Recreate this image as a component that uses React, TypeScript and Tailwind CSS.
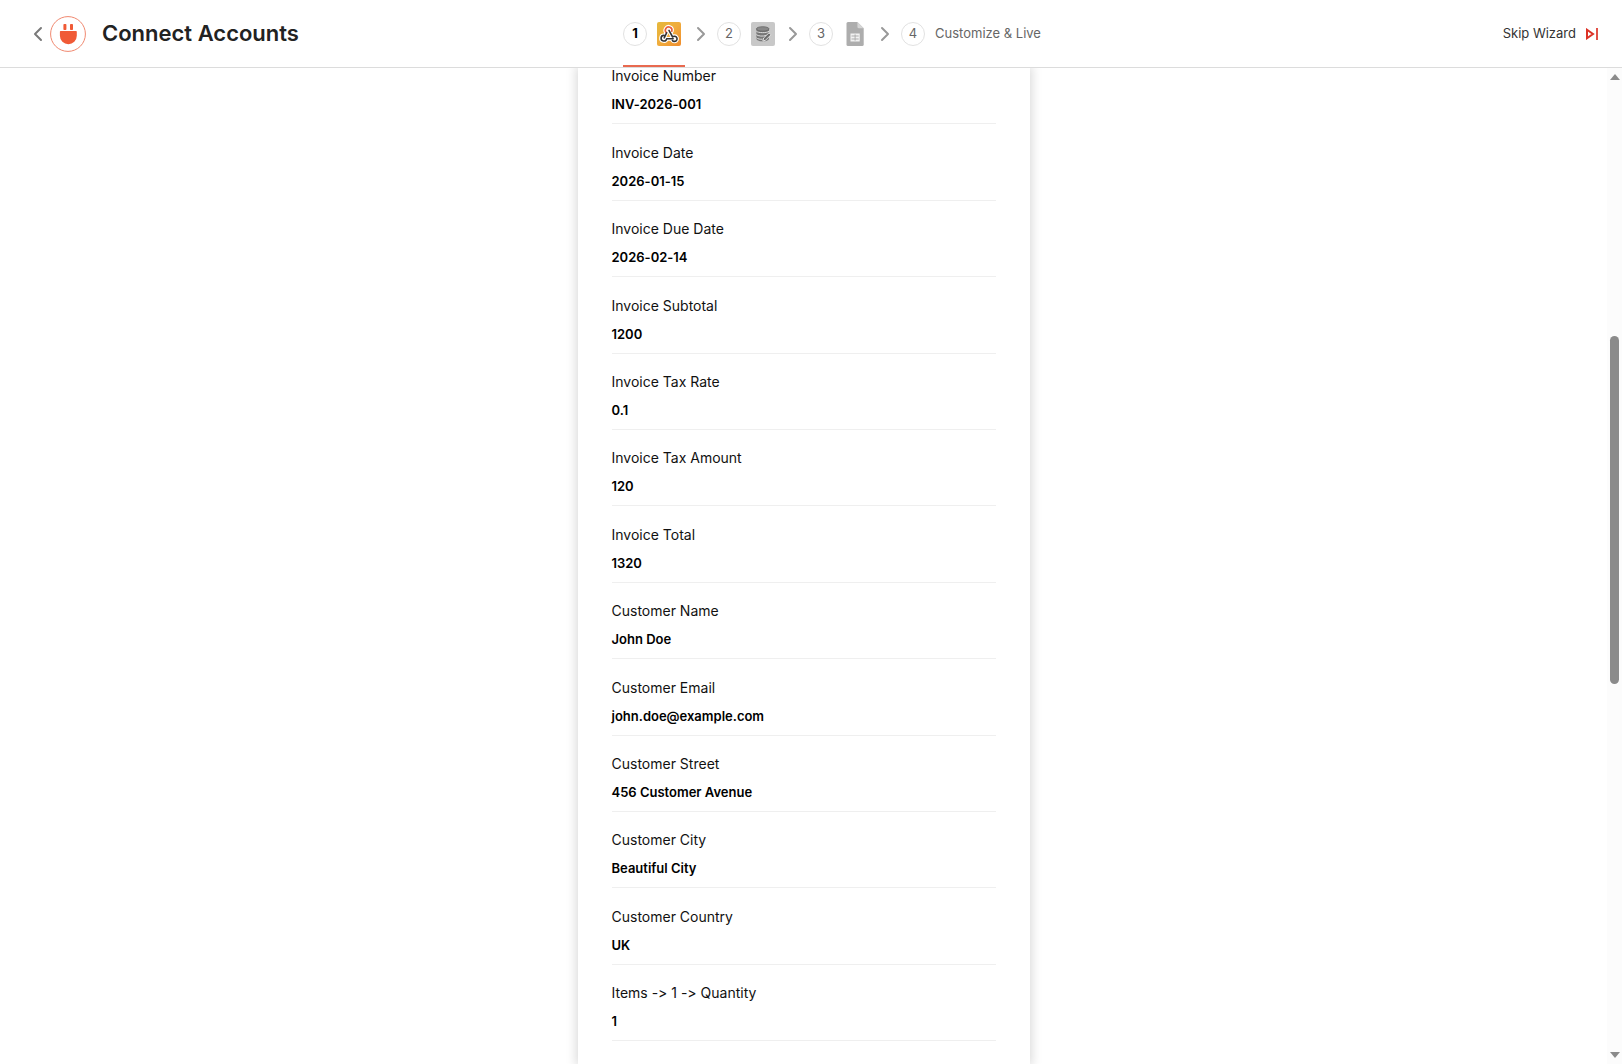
import React from 'react';
import { ChevronLeft, ChevronRight } from 'lucide-react';

const fields = [
  { label: 'Invoice Number', value: 'INV-2026-001' },
  { label: 'Invoice Date', value: '2026-01-15' },
  { label: 'Invoice Due Date', value: '2026-02-14' },
  { label: 'Invoice Subtotal', value: '1200' },
  { label: 'Invoice Tax Rate', value: '0.1' },
  { label: 'Invoice Tax Amount', value: '120' },
  { label: 'Invoice Total', value: '1320' },
  { label: 'Customer Name', value: 'John Doe' },
  { label: 'Customer Email', value: 'john.doe@example.com' },
  { label: 'Customer Street', value: '456 Customer Avenue' },
  { label: 'Customer City', value: 'Beautiful City' },
  { label: 'Customer Country', value: 'UK' },
  { label: 'Items -> 1 -> Quantity', value: '1' },
];

const PlugLogo: React.FC = () => (
  <svg viewBox="0 0 36 36" className="h-9 w-9 shrink-0">
    <circle cx="18" cy="18" r="17.4" fill="#fff" stroke="#f0886f" strokeWidth="1" />
    <rect x="13.4" y="8" width="3" height="6" rx="0.8" fill="#f05a36" />
    <rect x="20" y="8" width="3" height="6" rx="0.8" fill="#f05a36" />
    <path d="M10.6 15h15.500a.7.7 0 0 1 .7.700V19.800a8.450 8.450 0 0 1-16.900 0v-4.100a.7.7 0 0 1 .7-.700z" fill="#f05a36" />
  </svg>
);

const WebhookIcon: React.FC = () => (
  <svg viewBox="0 0 24 24" className="h-6 w-6">
    <defs>
      <linearGradient id="hook-bg" x1="0" y1="0" x2="1" y2="1">
        <stop offset="0" stopColor="#e5b83c" />
        <stop offset="0.5" stopColor="#f0ac3c" />
        <stop offset="1" stopColor="#f08c2c" />
      </linearGradient>
    </defs>
    <rect width="24" height="24" rx="2" fill="url(#hook-bg)" />
    <g fill="none" strokeLinecap="round" strokeLinejoin="round">
      <g stroke="#fff" strokeWidth="3.8">
        <path d="M9.6 10.8a3.3 3.3 0 1 1 5.2-1.6" />
        <path d="M12 8.4l3.6 6.6a2.600 2.600 0 1 1-.2 3.400" />
        <path d="M9.6 10.8l-2.4 5M7 13.400a2.800 2.800 0 1 0 2.600 3.400h6.600" />
      </g>
      <path d="M9.6 10.8a3.3 3.3 0 1 1 5.2-1.6" stroke="#e8603c" strokeWidth="1.6" />
      <path d="M12 8.4l3.6 6.6a2.600 2.600 0 1 1-.2 3.400" stroke="#333" strokeWidth="1.6" />
      <path d="M9.6 10.8l-2.4 5M7 13.400a2.800 2.800 0 1 0 2.600 3.400h6.600" stroke="#333" strokeWidth="1.6" />
    </g>
  </svg>
);

const DatabaseIcon: React.FC = () => (
  <svg viewBox="0 0 24 24" className="h-6 w-6">
    <rect width="24" height="24" rx="2" fill="#c8c8c8" />
    <path d="M5.4 7v9.5c0 1.7 2.8 2.9 6.3 2.9s6.3-1.2 6.3-2.9V7z" fill="#777" />
    <path d="M5.4 9.3c1.4 1.6 10 2 12.6 0M5.4 12.6c1.4 1.6 7 2 9.6.8M5.4 15.8c1.2 1.2 4 1.6 6 1.4" fill="none" stroke="#ddd" strokeWidth="1" />
    <ellipse cx="11.7" cy="6.9" rx="6.3" ry="2.2" fill="#888" stroke="#666" strokeWidth=".8" />
    <path d="M11.800 19.200l.8-3.200 5.400-5.200 2 2-5.400 5.300z" fill="#6b6b6b" stroke="#e2e2e2" strokeWidth="1" />
  </svg>
);

const SheetIcon: React.FC = () => (
  <svg viewBox="0 0 24 24" className="h-6 w-6">
    <path d="M5 0h9.4l6.3 6.2v16.3a1.5 1.5 0 0 1-1.5 1.5H5a1.5 1.5 0 0 1-1.5-1.5v-21A1.5 1.5 0 0 1 5 0z" fill="#adadad" />
    <path d="M14.4 0l6.3 6.2h-4.800a1.5 1.5 0 0 1-1.5-1.5z" fill="#d5d5d5" />
    <rect x="7.5" y="11.5" width="9.2" height="8" fill="#f2f2f2" />
    <path d="M8.5 14h7.2M8.5 17h7.2M12.1 12.4v6.2" stroke="#adadad" strokeWidth="1" />
  </svg>
);

const SkipIcon: React.FC = () => (
  <svg viewBox="0 0 12 12" className="h-3 w-3" fill="none" stroke="#dc3327">
    <path d="M1 1.8v8.4l6-4.2z" strokeWidth="2" />
    <path d="M11 0v12" strokeWidth="1.7" />
  </svg>
);

const steps = [
  { id: 1, name: 'Webhook', icon: WebhookIcon },
  { id: 2, name: 'Data store', icon: DatabaseIcon },
  { id: 3, name: 'Sheet', icon: SheetIcon },
];

const Header: React.FC = () => (
  <header className="grid h-[68px] shrink-0 grid-cols-[1fr_auto_1fr] items-center border-b border-[#dcdcdc] px-6">
    <div className="flex items-center">
      <button aria-label="Back" className="pr-0.5 pl-1 text-[#7a7a7a]">
        <ChevronLeft className="h-5 w-5" strokeWidth={2} viewBox="2 2 20 20" />
      </button>
      <PlugLogo />
      <h1 className="ml-4 text-[22px] font-semibold whitespace-nowrap text-[#222]">Connect Accounts</h1>
    </div>

    <nav aria-label="Wizard steps" className="flex h-full items-center pl-[42px]">
      {steps.map(({ id, name, icon: Icon }) => (
        <React.Fragment key={id}>
          <a
            href={`#step-${id}`}
            aria-label={name}
            className={`relative flex h-full items-center gap-2.5 ${id === 1 ? 'pr-1 text-black' : 'pr-0.5 text-[#666]'}`}
          >
            <span
              className={`flex h-6 w-6 items-center justify-center rounded-full border border-[#e2e2e2] text-[13px] ${id === 1 ? 'font-bold' : ''}`}
            >
              {id}
            </span>
            <Icon />
            {id === 1 && <span className="absolute inset-x-0 bottom-0 h-0.5 bg-[#e8694f]" />}
          </a>
          <ChevronRight className="mx-1.5 h-5 w-5 text-[#999]" strokeWidth={2} viewBox="2 2 20 20" />
        </React.Fragment>
      ))}
      <a href="#step-4" className="flex items-center gap-2.5 text-[#666]">
        <span className="flex h-6 w-6 items-center justify-center rounded-full border border-[#e2e2e2] text-[13px]">4</span>
        <span className="text-[13px] whitespace-nowrap">Customize &amp; Live</span>
      </a>
    </nav>

    <div className="flex justify-end">
      <button className="flex items-center gap-2.5 text-[13px] whitespace-nowrap text-[#333]">
        Skip Wizard
        <SkipIcon />
      </button>
    </div>
  </header>
);

// share of the track above, on and below the thumb
const scroll = { before: 255, thumb: 348, after: 367 };

const ScrollRail: React.FC = () => (
  <div className="flex w-[15px] shrink-0 flex-col items-center bg-[#fcfcfc] py-1.5">
    <svg viewBox="0 0 10 6" className="h-1.5 w-2.5 shrink-0">
      <path d="M5 0l5 6H0z" fill="#8b8b8b" />
    </svg>
    <div className="flex w-[9px] flex-1 flex-col">
      <div style={{ flexGrow: scroll.before }} />
      <div className="rounded-full bg-[#8b8b8b]" style={{ flexGrow: scroll.thumb }} />
      <div style={{ flexGrow: scroll.after }} />
    </div>
    <svg viewBox="0 0 10 6" className="h-1.5 w-2.5 shrink-0">
      <path d="M0 0h10L5 6z" fill="#8b8b8b" />
    </svg>
  </div>
);

export default function App() {
  return (
    <div className="flex h-screen flex-col overflow-hidden bg-white font-[Inter,sans-serif] [font-variant-ligatures:none]">
      <Header />
      <div className="flex min-h-0 flex-1">
        <main className="flex min-w-0 flex-1 justify-center overflow-hidden">
          <section className="flex w-full max-w-[452px] flex-col px-[34px] pb-[23px] shadow-[0_0_10px_2px_rgba(0,0,0,0.15)]">
            <dl className="-mt-5 flex flex-1 flex-col">
              {fields.map((field) => (
                <div key={field.label} className="flex flex-1 flex-col justify-end border-b border-[#efefef] pb-[9px]">
                  <dt className="text-[14px] leading-5 text-[#111]">{field.label}</dt>
                  <dd className="mt-2 text-[13px] leading-5 font-semibold text-black">{field.value}</dd>
                </div>
              ))}
            </dl>
          </section>
        </main>
        <ScrollRail />
      </div>
    </div>
  );
}
